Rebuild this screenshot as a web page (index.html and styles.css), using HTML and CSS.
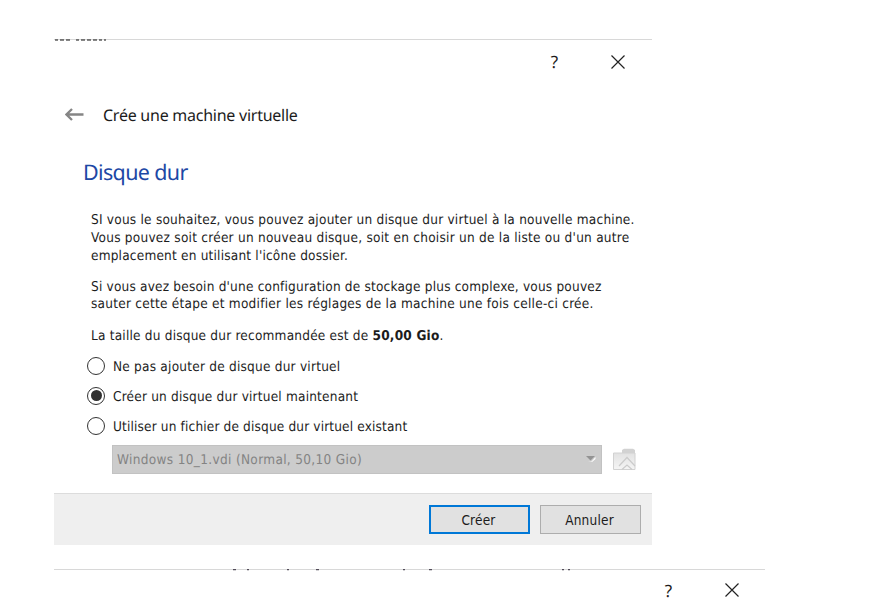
FILE: index.html
```html
<!DOCTYPE html>
<html lang="fr">
<head>
<meta charset="utf-8">
<title>Crée une machine virtuelle</title>
<link rel="stylesheet" href="styles.css">
</head>
<body>
<main class="page">
  <section class="dialog">
    <svg class="clipped-text" width="54" height="3" viewBox="0 0 54 3"><path d="M1 1H4M6 1H10M12 1H16M22 1H25M27 1H31M33 1H37M39 1H43M45 1H48M50 1H52" stroke="#111" stroke-width="1.2"/></svg>
    <header class="titlebar">
      <span class="help">?</span>
      <svg class="close" width="16" height="16" viewBox="0 0 16 16"><path d="M1.5 1.5L14.5 14.5M14.5 1.5L1.5 14.5" stroke="#222" stroke-width="1.2"/></svg>
    </header>
    <div class="wizard-head">
      <svg class="back" width="19" height="14" viewBox="0 0 19 14"><path d="M1.5 6.5H18.5M7 1L1.5 6.5L7 12" fill="none" stroke="#858585" stroke-width="2.3"/></svg>
      <h1 class="wizard-title">Crée une machine virtuelle</h1>
    </div>
    <h2 class="step-title">Disque dur</h2>
    <div class="copy">
      <p><span class="l1">SI vous le souhaitez, vous pouvez ajouter un disque dur virtuel à la nouvelle machine.</span><br><span class="l2">Vous pouvez soit créer un nouveau disque, soit en choisir un de la liste ou d'un autre</span><br><span class="l3">emplacement en utilisant l'icône dossier.</span></p>
      <p><span class="l4">Si vous avez besoin d'une configuration de stockage plus complexe, vous pouvez</span><br><span class="l5">sauter cette étape et modifier les réglages de la machine une fois celle-ci crée.</span></p>
      <p><span class="l6">La taille du disque dur recommandée est de <b>50,00 Gio</b>.</span></p>
    </div>
    <div class="options">
      <div class="option"><i class="radio"></i><span class="o1">Ne pas ajouter de disque dur virtuel</span></div>
      <div class="option"><i class="radio checked"></i><span class="o2">Créer un disque dur virtuel maintenant</span></div>
      <div class="option"><i class="radio"></i><span class="o3">Utiliser un fichier de disque dur virtuel existant</span></div>
    </div>
    <div class="file-row">
      <div class="select"><span class="o4">Windows 10_1.vdi (Normal, 50,10 Gio)</span>
        <svg width="10" height="6" viewBox="0 0 10 6"><path d="M2 5.5H5.5L9.5 1V3L6 6Z" fill="#fff"/><path d="M0 0H9L4.5 4.6Z" fill="#939393"/></svg>
      </div>
      <svg class="folder" width="23" height="23" viewBox="0 0 23 23">
        <defs><linearGradient id="g" x1="0" y1="0" x2="0" y2="1"><stop offset="0" stop-color="#e2e2e2"/><stop offset="1" stop-color="#f5f5f5"/></linearGradient></defs>
        <path d="M9 5V2L11 .8H20L22 2V6Z" fill="#d2d2d2"/>
        <path d="M.5 5H22V21.5H.5Z" fill="url(#g)" stroke="#d2d2d2"/>
        <path d="M6 18L14 9.5L22 18M9 21.5L14 17L19 21.5" fill="none" stroke="#cbcbcb" stroke-width="1.2"/>
      </svg>
    </div>
    <footer class="actions">
      <button class="btn primary">Créer</button>
      <button class="btn">Annuler</button>
    </footer>
  </section>
  <section class="dialog next">
    <svg class="clipped-text" width="712" height="3" viewBox="0 0 712 3"><path d="M179 .6H182M193 .6H195M233 .6H235M262 .6H265M349 .6H351M375 .6H378M508 .6H510M514 .6H516" stroke="#514b58" stroke-width="1.1"/></svg>
    <header class="titlebar">
      <span class="help">?</span>
      <svg class="close" width="16" height="16" viewBox="0 0 16 16"><path d="M1.5 1.5L14.5 14.5M14.5 1.5L1.5 14.5" stroke="#222" stroke-width="1.2"/></svg>
    </header>
  </section>
</main>
</body>
</html>
```
FILE: styles.css
```css
* { box-sizing: border-box; }
body { margin: 0; background: #fff; color: #1c1c1c; font-family: "DejaVu Sans Condensed", "DejaVu Sans", sans-serif; font-stretch: condensed; text-rendering: geometricPrecision; }
.page { height: 605px; padding: 39px 0 0 54px; overflow: hidden; }
.dialog { position: relative; width: 598px; height: 506px; border-top: 1px solid #d8d8d8; display: flex; flex-direction: column; }
.dialog.next { width: 711px; height: 60px; margin-top: 24px; }
.clipped-text { position: absolute; left: 0; top: -1px; }
.titlebar { height: 43px; flex: none; display: flex; align-items: center; justify-content: flex-end; padding-right: 26px; font-family: "Noto Sans", sans-serif; }
.dialog.next .titlebar { padding-right: 25px; height: 40px; }
.help { font-size: 17px; width: 9px; margin-right: 51px; text-align: center; }
.wizard-head { height: 64px; flex: none; display: flex; align-items: center; padding-left: 11px; gap: 19px; }
.wizard-title { margin: 0; font: 400 16px/24px "Noto Sans", sans-serif; letter-spacing: -.25px; white-space: nowrap; }
.step-title { margin: 10px 0 0 29px; font: 400 21.5px/32px "Noto Sans", sans-serif; letter-spacing: -.65px; color: #1d48a5; white-space: nowrap; }
.copy { margin: 23px 0 0 37px; font-size: 13.5px; line-height: 17.8px; white-space: nowrap; }
.copy p { margin: 0 0 13.3px; }
.l1 { letter-spacing: .23px; }
.l2 { letter-spacing: .25px; }
.l3 { letter-spacing: .2px; }
.l4 { letter-spacing: .2px; }
.l5 { letter-spacing: .25px; }
.l6 { letter-spacing: .21px; }
.o1 { letter-spacing: .23px; }
.o2 { letter-spacing: .2px; }
.o3 { letter-spacing: .16px; }
.o4 { letter-spacing: .33px; }
.options { margin: -8px 0 0 33px; font-size: 13.5px; }
.option { height: 30px; display: flex; align-items: center; gap: 8px; white-space: nowrap; }
.option span, .select span { padding-top: 2px; }
.radio { width: 18px; height: 18px; border: 1px solid #333; border-radius: 50%; display: flex; align-items: center; justify-content: center; }
.radio.checked::after { content: ""; width: 11px; height: 11px; border-radius: 50%; background: #303030; }
.file-row { display: flex; align-items: center; margin: 4px 0 0 58px; gap: 11px; }
.select { width: 490px; height: 29px; background: #ccc; border: 1px solid #c2c2c2; color: #838383; display: flex; align-items: center; justify-content: space-between; padding: 0 5px 0 4px; font-size: 13.5px; }
.actions { margin-top: auto; height: 52px; background: #efefef; border-top: 1px solid #dcdcdc; display: flex; align-items: center; justify-content: flex-end; gap: 10px; padding-right: 11px; }
.btn { width: 101px; height: 29px; padding: 0 2px 0 0; background: #e1e1e1; border: 1px solid #adadad; font: inherit; font-size: 13.5px; letter-spacing: .2px; color: #1c1c1c; }
.btn.primary { border: 2px solid #0078d7; }
```
